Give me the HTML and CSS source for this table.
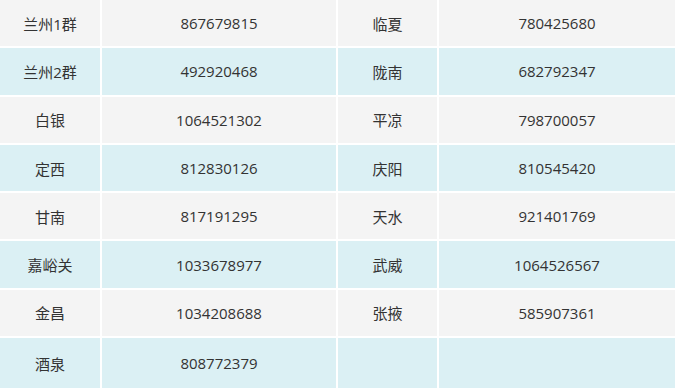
FILE: index.html
```html
<!DOCTYPE html>
<html lang="zh">
<head>
<meta charset="utf-8">
<link rel="stylesheet" href="styles.css">
</head>
<body>
<div class="grid">
  <div class="cell gray">兰州1群</div><div class="cell gray">867679815</div><div class="cell gray">临夏</div><div class="cell gray">780425680</div>
  <div class="cell cyan">兰州2群</div><div class="cell cyan">492920468</div><div class="cell cyan">陇南</div><div class="cell cyan">682792347</div>
  <div class="cell gray">白银</div><div class="cell gray">1064521302</div><div class="cell gray">平凉</div><div class="cell gray">798700057</div>
  <div class="cell cyan">定西</div><div class="cell cyan">812830126</div><div class="cell cyan">庆阳</div><div class="cell cyan">810545420</div>
  <div class="cell gray">甘南</div><div class="cell gray">817191295</div><div class="cell gray">天水</div><div class="cell gray">921401769</div>
  <div class="cell cyan">嘉峪关</div><div class="cell cyan">1033678977</div><div class="cell cyan">武威</div><div class="cell cyan">1064526567</div>
  <div class="cell gray">金昌</div><div class="cell gray">1034208688</div><div class="cell gray">张掖</div><div class="cell gray">585907361</div>
  <div class="cell cyan last">酒泉</div><div class="cell cyan last">808772379</div><div class="cell cyan last"></div><div class="cell cyan last"></div>
</div>
</body>
</html>
```
FILE: styles.css
```css
html, body {
  margin: 0;
  padding: 0;
  background: #ffffff;
}
body {
  font-family: "Open Sans", "Noto Sans CJK SC", sans-serif;
  font-size: 15px;
  color: #333333;
}
.grid {
  display: grid;
  grid-template-columns: 100px 234px 99px 1fr;
  grid-template-rows: repeat(7, 46.3px) 50px;
  gap: 2px;
  width: 675px;
}
.cell {
  display: flex;
  align-items: center;
  justify-content: center;
}
.gray { background: #f4f4f4; }
.cyan { background: #dbf0f4; }
```
